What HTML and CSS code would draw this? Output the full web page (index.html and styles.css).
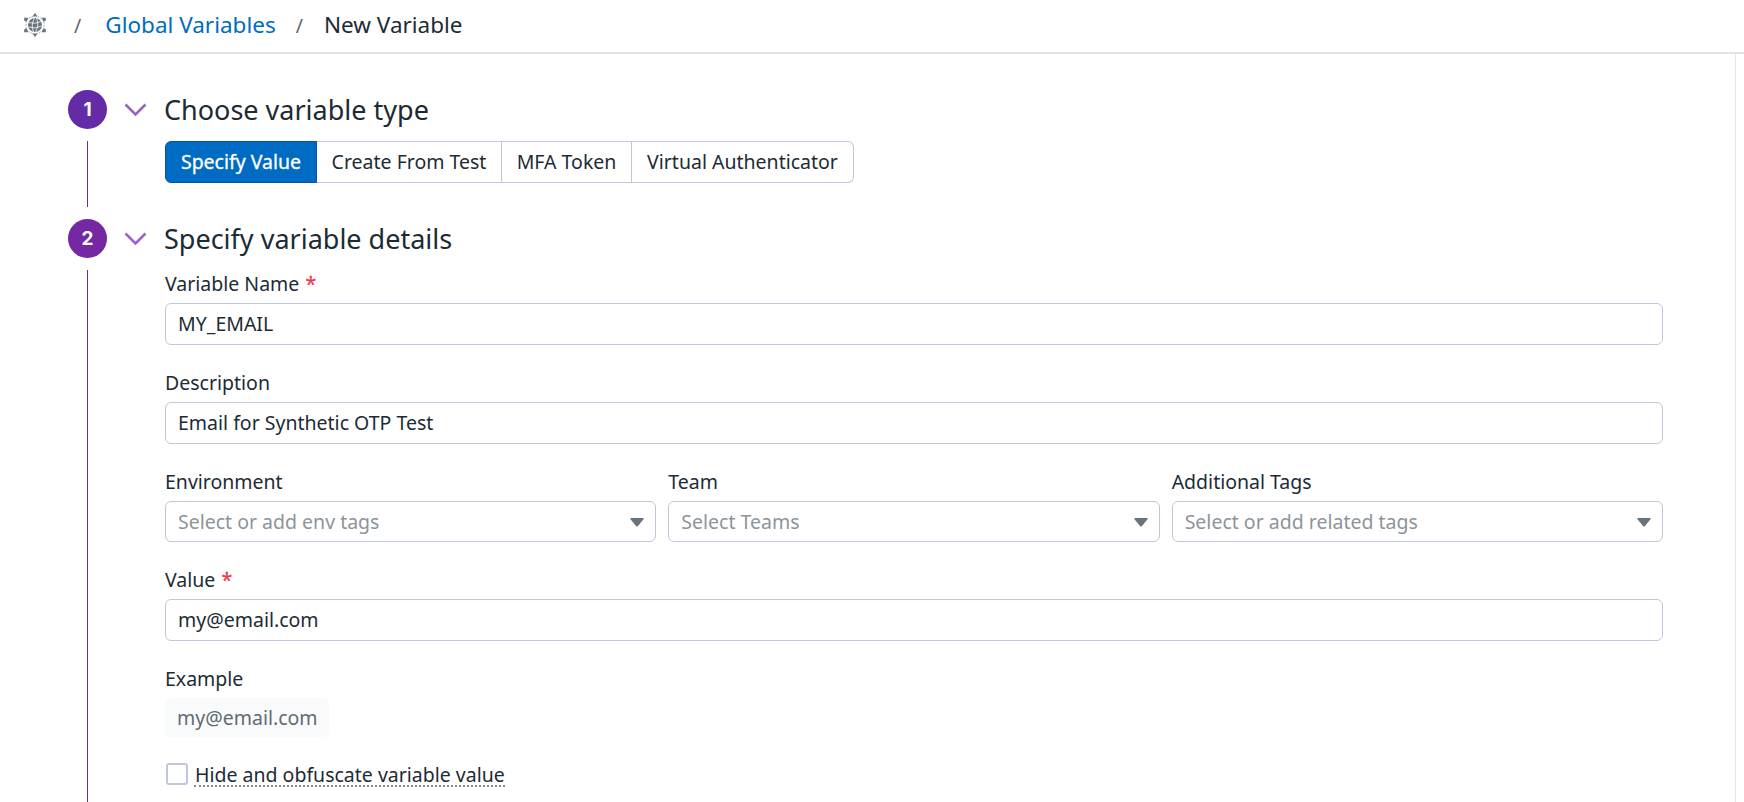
FILE: index.html
```html
<!DOCTYPE html>
<html lang="en">
<head>
<meta charset="utf-8">
<title>New Variable</title>
<link rel="stylesheet" href="styles.css">
</head>
<body>
<header class="topbar">
  <svg class="logo" width="24" height="26" viewBox="0 0 24 26">
    <path class="logo-ring" d="M12 3 21 8V18L12 23 3 18V8Z"/>
    <circle cx="12" cy="13" r="7"/>
    <path class="logo-grid" d="M5.500 10.500Q12 12.500 18 9.500M5.500 15Q12 17.500 18.500 14M11.500 6Q7.500 13 10.500 20M13.500 6Q16.500 13 12.500 20"/>
    <path d="M12 .800l2.300 3.700h-4.600zM12 25.200l2.300-3.700h-4.600zM1.200 5.800h4l-1.400 3.700-2.600-.8zM22.800 5.800h-4l1.400 3.700 2.600-.8zM1.200 20.200h4l-1.400-3.700-2.600.8zM22.800 20.200h-4l1.400-3.700 2.600.8z"/>
  </svg>
  <span class="slash slash-first">/</span>
  <a class="crumb-link">Global Variables</a>
  <span class="slash slash-second">/</span>
  <span class="crumb">New Variable</span>
</header>
<main class="page">
  <section class="step step-one">
    <div class="rail"><span class="number">1</span><span class="line"></span></div>
    <div class="content">
      <div class="heading">
        <svg class="chevron" width="23" height="14" viewBox="0 0 23 14"><path d="M1.500 1.500 11.500 11.500 21.500 1.500"/></svg>
        <h2>Choose variable type</h2>
      </div>
      <div class="segments">
        <button class="segment active">Specify Value</button>
        <button class="segment from-test">Create From Test</button>
        <button class="segment mfa">MFA Token</button>
        <button class="segment virtual">Virtual Authenticator</button>
      </div>
    </div>
  </section>
  <section class="step step-two">
    <div class="rail"><span class="number">2</span><span class="line"></span></div>
    <div class="content">
      <div class="heading">
        <svg class="chevron" width="23" height="14" viewBox="0 0 23 14"><path d="M1.500 1.500 11.500 11.500 21.500 1.500"/></svg>
        <h2>Specify variable details</h2>
      </div>
      <div class="form">
        <div class="field">
          <label>Variable Name <span class="required">*</span></label>
          <div class="input">MY_EMAIL</div>
        </div>
        <div class="field">
          <label>Description</label>
          <div class="input">Email for Synthetic OTP Test</div>
        </div>
        <div class="columns">
          <div class="field">
            <label>Environment</label>
            <div class="input select">Select or add env tags<svg width="14" height="9" viewBox="0 0 14 9"><path d="M1 0H13Q14.200 .4 13.300 1.500L8 8Q7 9 6 8L.7 1.500Q-.2.4 1 0Z"/></svg></div>
          </div>
          <div class="field">
            <label>Team</label>
            <div class="input select">Select Teams<svg width="14" height="9" viewBox="0 0 14 9"><path d="M1 0H13Q14.200 .4 13.300 1.500L8 8Q7 9 6 8L.7 1.500Q-.2.4 1 0Z"/></svg></div>
          </div>
          <div class="field">
            <label>Additional Tags</label>
            <div class="input select">Select or add related tags<svg width="14" height="9" viewBox="0 0 14 9"><path d="M1 0H13Q14.200 .4 13.300 1.500L8 8Q7 9 6 8L.7 1.500Q-.2.4 1 0Z"/></svg></div>
          </div>
        </div>
        <div class="field">
          <label>Value <span class="required">*</span></label>
          <div class="input">my@email.com</div>
        </div>
        <div class="field">
          <label>Example</label>
          <div class="chip">my@email.com</div>
        </div>
        <div class="check-row">
          <span class="checkbox"></span>
          <span class="check-label">Hide and obfuscate variable value</span>
        </div>
      </div>
    </div>
  </section>
</main>
</body>
</html>
```
FILE: styles.css
```css
* { box-sizing: border-box; }
body {
  margin: 0;
  height: 802px;
  overflow: hidden;
  display: flex;
  flex-direction: column;
  background: #fff;
  color: #1c2b34;
  font: 19.5px/27px "Noto Sans", sans-serif;
}
.topbar {
  flex: none;
  height: 54px;
  padding: 0 0 4px 23px;
  display: flex;
  align-items: center;
  border-bottom: 2px solid #e1e4ec;
  font-size: 22.5px;
}
.logo { fill: #68737b; margin-top: 2px; }
.logo .logo-ring { fill: none; stroke: #a9b0b6; stroke-width: 1; stroke-dasharray: 2 1; }
.logo .logo-grid { fill: none; stroke: #fff; stroke-width: .8; }
.slash { font-size: 19.5px; color: #5c6870; }
.slash-first { margin: 2px 24px 0 27px; }
.slash-second { margin: 2px 21px 0 20px; }
.crumb-link { color: #006bc2; }
.page {
  flex: none;
  width: 1736px;
  height: 748px;
  padding: 36px 72px 0 68px;
  display: flex;
  flex-direction: column;
  gap: 12px;
  border-right: 1px solid #e1e4e8;
}
.step { display: flex; gap: 17px; }
.step-one { --accent: #632ca6; --accent-light: #9166c4; }
.step-two { --accent: #7627a3; --accent-light: #9d62c2; flex: 1; }
.rail {
  flex: none;
  width: 39px;
  display: flex;
  flex-direction: column;
  align-items: center;
  gap: 12px;
}
.number {
  width: 39px;
  height: 39px;
  padding-top: 1px;
  border-radius: 50%;
  background: var(--accent);
  color: #fff;
  font: 700 19px/38px Inter, sans-serif;
  text-align: center;
}
.line { flex: 1; width: 1px; background: var(--accent); }
.content { flex: 1; min-width: 0; }
.heading { height: 39px; display: flex; align-items: center; gap: 17px; }
.heading h2 { margin: 0; font-size: 27px; font-weight: 400; line-height: 39px; }
.chevron { fill: none; stroke: var(--accent-light); stroke-width: 2.600; }
.segments { display: flex; width: 689px; margin: 12px 0 24px 41px; }
.segment {
  height: 42px;
  padding: 0 0 2px;
  border: 1px solid #c0c6de;
  border-left: 0;
  background: #fff;
  color: inherit;
  font: inherit;
  text-align: center;
}
.segment.active {
  width: 152px;
  background: #006bc2;
  border: 1px solid #0052b5;
  border-radius: 6px 0 0 6px;
  color: #fff;
  -webkit-text-stroke: .3px #fff;
}
.from-test { width: 185px; }
.mfa { width: 130px; }
.virtual { width: 222px; border-radius: 0 6px 6px 0; }
.form {
  padding: 12px 0 0 41px;
  display: flex;
  flex-direction: column;
  gap: 24px;
}
.field { display: flex; flex-direction: column; gap: 6px; }
.required { color: #eb364b; margin-left: 1px; -webkit-text-stroke: .3px #eb364b; }
.input {
  height: 42px;
  padding: 0 12px;
  border: 1px solid #c0c6de;
  border-radius: 6px;
  line-height: 40px;
}
.select {
  height: 41px;
  display: flex;
  align-items: center;
  justify-content: space-between;
  padding: 0 11px 0 12px;
  color: #8d949a;
}
.select svg { fill: #68737b; margin-top: 2px; }
.columns { display: grid; grid-template-columns: repeat(3, 1fr); gap: 12px; }
.chip {
  align-self: flex-start;
  height: 39px;
  padding: 0 11px 0 12px;
  border-radius: 6px;
  background: #f9fafb;
  color: #5f6b73;
  line-height: 39px;
}
.check-row { display: flex; align-items: center; gap: 6px; height: 26px; padding-left: 1px; }
.checkbox { width: 22px; height: 22px; border: 2px solid #c0c6de; border-radius: 3px; }
.check-label { height: 26px; padding-left: 1px; line-height: 28px; border-bottom: 2px dotted #7d878e; }
```
